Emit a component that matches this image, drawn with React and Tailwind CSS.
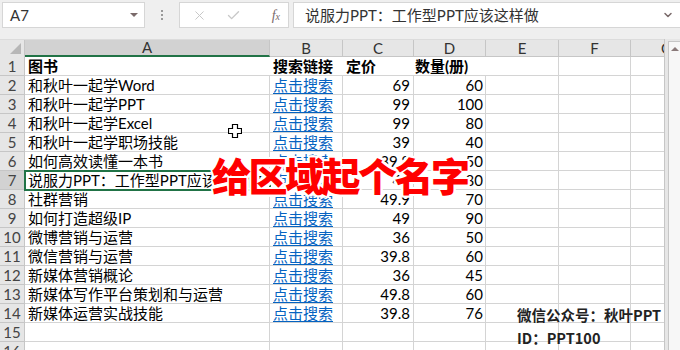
import { X, Check, ChevronDown } from 'lucide-react';

const rows = [
  ['图书', '搜索链接', '定价', '数量(册)'],
  ['和秋叶一起学Word', '点击搜索', '69', '60'],
  ['和秋叶一起学PPT', '点击搜索', '99', '100'],
  ['和秋叶一起学Excel', '点击搜索', '99', '80'],
  ['和秋叶一起学职场技能', '点击搜索', '39', '40'],
  ['如何高效读懂一本书', '点击搜索', '39.8', '50'],
  ['说服力PPT：工作型PPT应该这样做', '点击搜索', '49', '80'],
  ['社群营销', '点击搜索', '49.9', '70'],
  ['如何打造超级IP', '点击搜索', '49', '90'],
  ['微博营销与运营', '点击搜索', '36', '50'],
  ['微信营销与运营', '点击搜索', '39.8', '60'],
  ['新媒体营销概论', '点击搜索', '36', '45'],
  ['新媒体写作平台策划和与运营', '点击搜索', '49.8', '60'],
  ['新媒体运营实战技能', '点击搜索', '39.8', '76'],
  ['', '', '', ''],
  ['', '', '', ''],
];

const cols = [
  { name: 'A', w: 'w-[245px]' },
  { name: 'B', w: 'w-[73px]' },
  { name: 'C', w: 'w-[71px]' },
  { name: 'D', w: 'w-[72px]' },
  { name: 'E', w: 'w-[73px]' },
  { name: 'F', w: 'w-[72px]' },
  { name: 'G', w: 'w-[72px]' },
];

const font = "font-['Lato','Noto_Sans_CJK_SC',sans-serif]";

function Row({ n, data }) {
  const head = n === 1;
  const sel = n === 7;
  return (
    <div className="flex h-[19px] shrink-0">
      <div
        className={`w-[25px] shrink-0 flex items-center justify-center border-r border-b border-[#c6c6c6] text-[15px] text-[#444] ${
          sel ? 'bg-[#d2d2d2]' : 'bg-[#e6e6e6]'
        }`}
      >
        {n}
      </div>
      {/* A */}
      <div
        className={`w-[245px] shrink-0 border-b border-[#d4d4d4] ${head ? 'bg-white' : 'border-r'} pl-[3px] flex items-center overflow-hidden whitespace-nowrap text-[15px] text-black ${head ? 'font-bold' : ''}`}
      >
        {data[0]}
      </div>
      {/* B */}
      <div
        className={`w-[73px] shrink-0 border-b border-[#d4d4d4] ${head ? '' : 'border-r'} pl-[3px] flex items-center whitespace-nowrap text-[15px] ${
          head ? 'font-bold text-black' : 'text-[#0563c1] underline underline-offset-2'
        }`}
      >
        {data[1]}
      </div>
      {/* C */}
      <div
        className={`w-[71px] shrink-0 border-b border-[#d4d4d4] ${head ? 'pl-[3px] font-bold justify-start' : 'border-r pr-[3px] justify-end'} flex items-center whitespace-nowrap text-[15px] text-black`}
      >
        {data[2]}
      </div>
      {/* D */}
      <div
        className={`w-[72px] shrink-0 border-b border-[#d4d4d4] ${head ? 'pl-[1px] font-bold justify-start' : 'border-r pr-[2px] justify-end'} flex items-center whitespace-nowrap text-[15px] text-black`}
      >
        {data[3]}
      </div>
      <div className="w-[73px] shrink-0 border-r border-b border-[#d4d4d4]" />
      <div className="w-[72px] shrink-0 border-r border-b border-[#d4d4d4]" />
      <div className="w-[72px] shrink-0 border-r border-b border-[#d4d4d4]" />
    </div>
  );
}

export default function App() {
  return (
    <div className={`relative w-[680px] h-[350px] overflow-hidden bg-white ${font}`}>
      {/* formula bar */}
      <div className="h-[39px] bg-[#efefef] flex items-start pt-[2px] pl-[2px] gap-[4px]">
        <div className="w-[143px] h-[26px] bg-white border border-[#d6d6d6] flex items-center justify-between pl-[7px] pr-[6px]">
          <span className="text-[15px] text-[#333]">A7</span>
          <span className="w-0 h-0 border-l-[4px] border-r-[4px] border-t-[4px] border-l-transparent border-r-transparent border-t-[#7a6a6a]" />
        </div>
        <div className="w-[26px] h-[26px] flex flex-col items-center justify-center gap-[2px]">
          <span className="w-[2px] h-[2px] bg-[#999]" />
          <span className="w-[2px] h-[2px] bg-[#999]" />
          <span className="w-[2px] h-[2px] bg-[#999]" />
        </div>
        <div className="w-[110px] h-[26px] bg-white border border-[#d6d6d6] flex items-center pl-[12px] pr-[8px]">
          <X className="w-[15px] h-[15px] text-[#c8c8c8]" strokeWidth={1.6} />
          <Check className="w-[15px] h-[15px] ml-[19px] text-[#c8c8c8]" strokeWidth={2.2} />
          <span className="ml-auto text-[14px] italic text-[#7a6a6a] font-['Liberation_Serif',serif]">
            f<span className="text-[10px]">x</span>
          </span>
        </div>
        <div className="flex-1 h-[26px] bg-white border border-[#d6d6d6] border-r-0 flex items-center pl-[11px] pr-[6px]">
          <span className="text-[15px] text-[#333] whitespace-nowrap">说服力PPT：工作型PPT应该这样做</span>
          <ChevronDown className="ml-auto w-[12px] h-[12px] text-[#7a6a6a]" strokeWidth={3} />
        </div>
      </div>

      <div className="flex">
        <div className="w-[665px] shrink-0 overflow-hidden flex flex-col border-r border-[#c6c6c6]">
          {/* column headers */}
          <div className="flex h-[18px] shrink-0 bg-[#e6e6e6] border-t border-[#dcdcdc]">
            <div className="w-[25px] shrink-0 border-r border-[#c6c6c6] relative">
              <span className="absolute right-[3px] bottom-[3px] w-0 h-0 border-l-[11px] border-l-transparent [border-bottom:11px_solid_#b7b7b7]" />
            </div>
            {cols.map((c) => (
              <div
                key={c.name}
                className={`${c.w} shrink-0 flex items-center justify-center text-[15px] text-[#333] border-r border-[#c6c6c6] ${
                  c.name === 'A' ? 'bg-[#d2d2d2] border-b-2 border-b-[#217346] text-[#1f5f9b]' : 'border-b border-b-[#c6c6c6]'
                }`}
              >
                {c.name}
              </div>
            ))}
          </div>
          {rows.map((r, i) => (
            <Row key={i} n={i + 1} data={r} />
          ))}
        </div>
        {/* scroll strip */}
        <div className="w-[15px] shrink-0 bg-[#e6e6e6] pl-[3px] pt-[2px]">
          <div className="h-full bg-[#f7f7f7] border border-[#c6c6c6] border-r-0 flex justify-center pt-[5px]">
            <span className="w-0 h-0 border-l-[4px] border-r-[4px] border-b-[4px] border-l-transparent border-r-transparent border-b-[#8a7a7a]" />
          </div>
        </div>
      </div>

      {/* selection A7 */}
      <div className="absolute left-[24px] top-[170px] w-[247px] h-[21px] border-2 border-[#217346]" />
      <div className="absolute left-[268px] top-[187px] w-[5px] h-[5px] bg-[#217346] border border-white" />

      {/* cursor */}
      <svg className="absolute left-[228px] top-[124px]" width="14" height="14" viewBox="0 0 14 14">
        <path d="M4.5 0.5h5v4h4v5h-4v4h-5v-4h-4v-5h4z" fill="#fff" stroke="#000" strokeWidth="1.2" />
      </svg>

      {/* overlay caption */}
      <div className="absolute left-[212px] top-[155px] text-[39px] leading-none font-black text-[#ff0000] tracking-[-2.5px] whitespace-nowrap font-['Noto_Sans_CJK_SC',sans-serif] [text-shadow:2px_0_#fff,-2px_0_#fff,0_2px_#fff,0_-2px_#fff,2px_2px_#fff,-2px_-2px_#fff,2px_-2px_#fff,-2px_2px_#fff]">
        给区域起个名字
      </div>

      {/* watermark */}
      <div className="absolute left-[517px] top-[303px] text-[14.5px] font-bold text-[#222] leading-[23px] font-['Noto_Sans_CJK_SC',sans-serif]">
        <div>微信公众号：秋叶PPT</div>
        <div>ID：PPT100</div>
      </div>
    </div>
  );
}
